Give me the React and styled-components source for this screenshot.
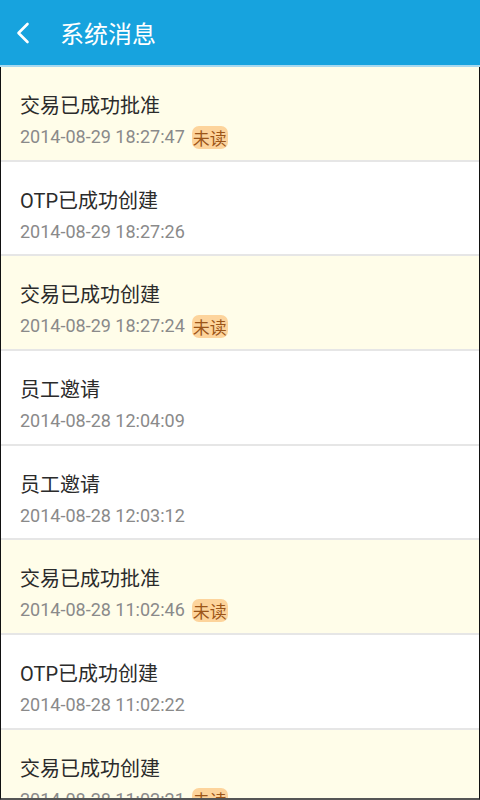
import React from "react";
import styled, { createGlobalStyle } from "styled-components";

const Global = createGlobalStyle`
  html, body { margin: 0; padding: 0; background: #fff; }
  body { font-family: Roboto, "Noto Sans CJK SC", sans-serif; overflow: hidden; }
`;

const Screen = styled.div`
  width: 480px;
  height: 800px;
  overflow: hidden;
  display: flex;
  flex-direction: column;
  background: #fff;
`;

const Header = styled.header`
  height: 65px;
  flex: none;
  background: #17a3de;
  border-bottom: 2px solid #a8d9f0;
  display: flex;
  align-items: center;
  padding-left: 12px;
  gap: 26px;
`;

const BackBtn = styled.div`
  width: 22px;
  height: 30px;
  display: flex;
  align-items: center;
  justify-content: center;
`;

const Title = styled.h1`
  margin: 0;
  font-family: Roboto, "Noto Sans CJK SC", sans-serif;
  font-weight: 400;
  font-size: 24px;
  color: #fff;
`;

const List = styled.div`
  flex: 1;
  overflow: hidden;
  border-left: 1px solid #111;
  border-right: 1px solid #111;
  border-bottom: 2px solid #555;
`;

const Row = styled.div`
  box-sizing: border-box;
  height: 94.7px;
  background: ${(p) => (p.$unread ? "#fffde9" : "#ffffff")};
  border-bottom: 2px solid #e6e6e6;
  padding: 26px 0 0 19px;
`;

const RowTitle = styled.div`
  font-size: 20px;
  line-height: 26px;
  color: #2b2b2b;
  font-family: Roboto, "Noto Sans CJK SC", sans-serif;
`;

const Meta = styled.div`
  margin-top: 6px;
  display: flex;
  align-items: center;
  gap: 7px;
  height: 24px;
`;

const Time = styled.span`
  font-size: 18px;
  line-height: 24px;
  color: #8a8a8a;
  font-family: Roboto, sans-serif;
`;

const Badge = styled.span`
  display: inline-flex;
  align-items: center;
  justify-content: center;
  height: 23px;
  padding: 0 1px;
  border-radius: 7px;
  background: #fdd49c;
  color: #9c5518;
  font-size: 17px;
  line-height: 23px;
  font-family: "Noto Sans CJK SC", sans-serif;
`;

const items = [
  { t: "交易已成功批准", d: "2014-08-29 18:27:47", u: true },
  { t: "OTP已成功创建", d: "2014-08-29 18:27:26", u: false },
  { t: "交易已成功创建", d: "2014-08-29 18:27:24", u: true },
  { t: "员工邀请", d: "2014-08-28 12:04:09", u: false },
  { t: "员工邀请", d: "2014-08-28 12:03:12", u: false },
  { t: "交易已成功批准", d: "2014-08-28 11:02:46", u: true },
  { t: "OTP已成功创建", d: "2014-08-28 11:02:22", u: false },
  { t: "交易已成功创建", d: "2014-08-28 11:02:21", u: true },
];

export default function App() {
  return (
    <Screen>
      <Global />
      <Header>
        <BackBtn>
          <svg width="16" height="24" viewBox="0 0 16 24">
            <path d="M12.5 3 L3.5 12 L12.5 21" fill="none" stroke="#fff" strokeWidth="2.6" strokeLinecap="round" strokeLinejoin="round" />
          </svg>
        </BackBtn>
        <Title>系统消息</Title>
      </Header>
      <List>
        {items.map((it, i) => (
          <Row key={i} $unread={it.u}>
            <RowTitle>{it.t}</RowTitle>
            <Meta>
              <Time>{it.d}</Time>
              {it.u && <Badge>未读</Badge>}
            </Meta>
          </Row>
        ))}
      </List>
    </Screen>
  );
}
